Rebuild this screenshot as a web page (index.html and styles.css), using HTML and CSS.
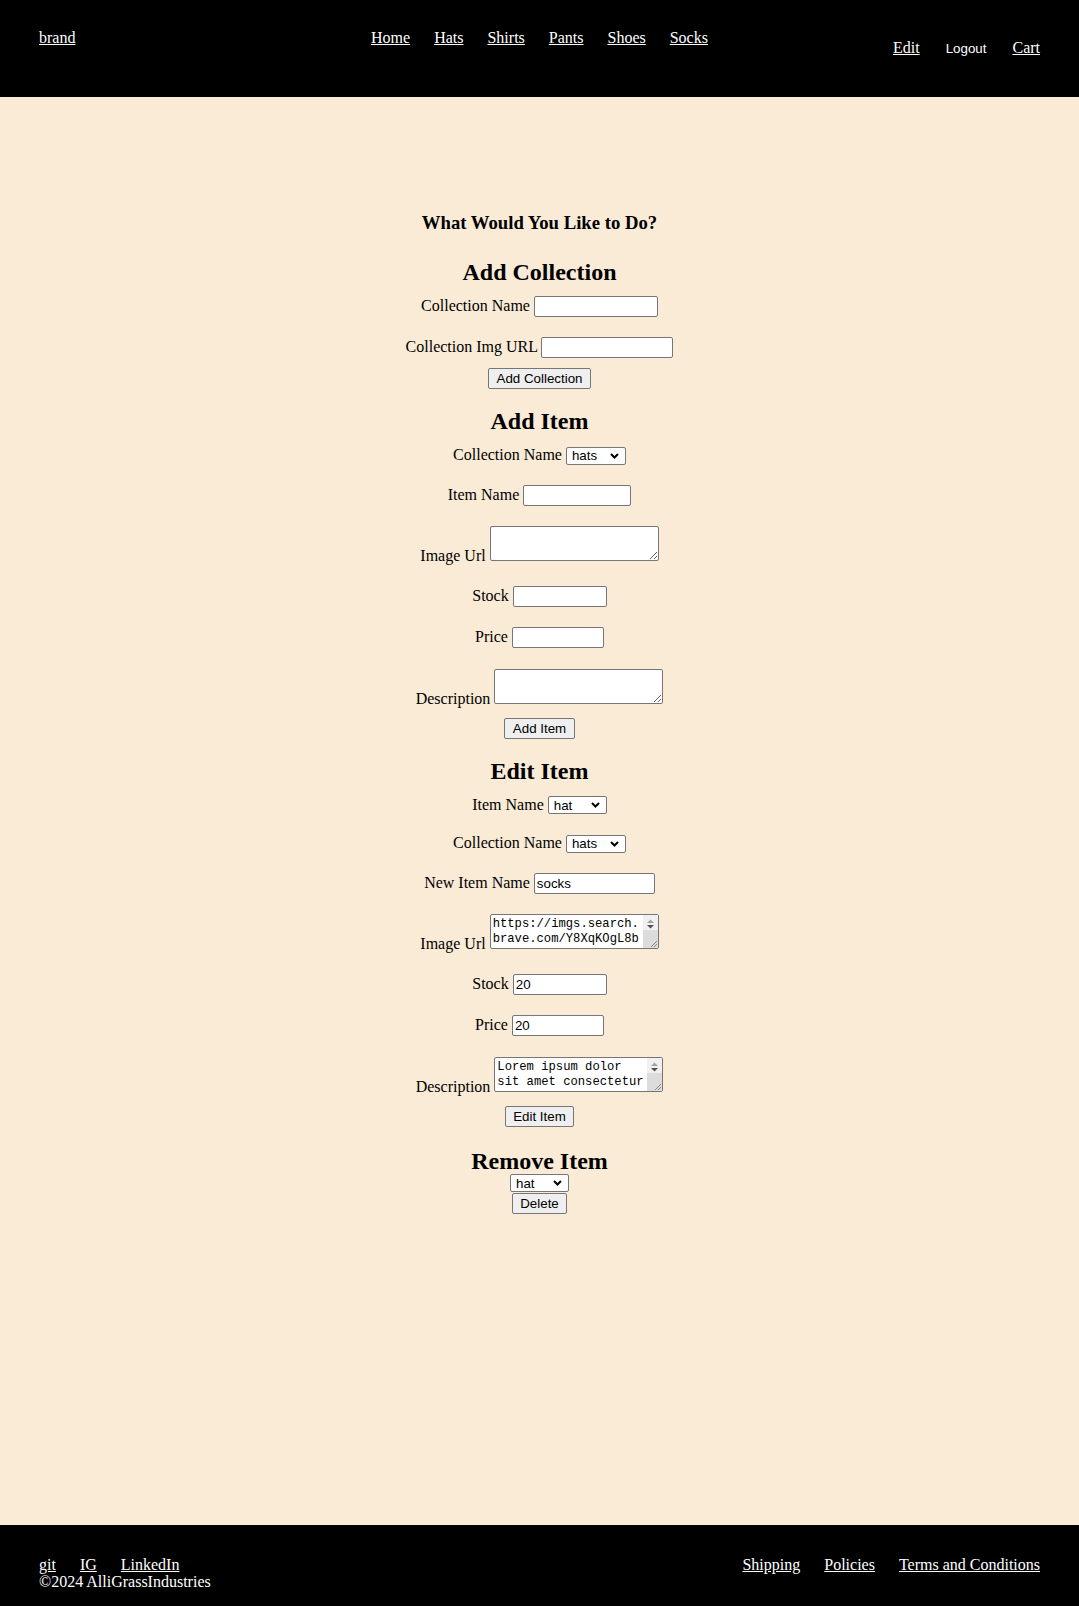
FILE: index.html
```html
<!DOCTYPE html>
<html lang="en">
<head>
<meta charset="utf-8">
<title>Edit</title>
<link rel="stylesheet" href="styles.css">
</head>
<body>
<header class="topbar">
  <a class="brand" href="#">brand</a>
  <nav class="nav">
    <a href="#">Home</a>
    <a href="#">Hats</a>
    <a href="#">Shirts</a>
    <a href="#">Pants</a>
    <a href="#">Shoes</a>
    <a href="#">Socks</a>
  </nav>
  <div class="account">
    <a href="#">Edit</a>
    <button class="logout" type="button">Logout</button>
    <a href="#">Cart</a>
  </div>
</header>

<main class="admin">
  <h3 class="ask">What Would You Like to Do?</h3>

  <section class="group group-first">
    <h2>Add Collection</h2>
    <div class="row">Collection Name <input class="in w124" type="text"></div>
    <div class="row">Collection Img URL <input class="in w132" type="text"></div>
    <div class="row row-btn"><button class="btn" type="button">Add Collection</button></div>
  </section>

  <section class="group">
    <h2>Add Item</h2>
    <div class="row row-sel">Collection Name <span class="sel"><select class="w60"><option>hats</option></select><svg class="chev" width="9" height="6" viewBox="0 0 9 6"><polyline points="1,1 4.5,4.5 8,1" fill="none" stroke="#000" stroke-width="2"/></svg></span></div>
    <div class="row">Item Name <input class="in w108" type="text"></div>
    <div class="row row-ta">Image Url <span class="ta"><textarea class="w169"></textarea></span></div>
    <div class="row">Stock <input class="in w94" type="text"></div>
    <div class="row">Price <input class="in w92" type="text"></div>
    <div class="row row-ta">Description <span class="ta"><textarea class="w169"></textarea></span></div>
    <div class="row row-btn"><button class="btn" type="button">Add Item</button></div>
  </section>

  <section class="group">
    <h2>Edit Item</h2>
    <div class="row row-sel">Item Name <span class="sel"><select class="w59"><option>hat</option></select><svg class="chev" width="9" height="6" viewBox="0 0 9 6"><polyline points="1,1 4.5,4.5 8,1" fill="none" stroke="#000" stroke-width="2"/></svg></span></div>
    <div class="row row-sel">Collection Name <span class="sel"><select class="w60"><option>hats</option></select><svg class="chev" width="9" height="6" viewBox="0 0 9 6"><polyline points="1,1 4.5,4.5 8,1" fill="none" stroke="#000" stroke-width="2"/></svg></span></div>
    <div class="row">New Item Name <input class="in w121" type="text" value="socks"></div>
    <div class="row row-ta">Image Url <span class="ta"><textarea class="w169 filled url">https://imgs.search.brave.com/Y8XqKOgL8bLcHQWPZzRvWOJxvmVYKyZgJBvCqJqJ5ec/rs:fit:500:0:0/g:ce/aHR0cHM6Ly9tZWRp</textarea><span class="sb"><span class="sb-btns"><svg width="15" height="15" viewBox="0 0 15 15"><polygon points="4,8 7.5,4.5 11,8" fill="#a3a3a3"/><polygon points="4,10 7.5,13.5 11,10" fill="#505050"/></svg></span><span class="sb-corner"><svg width="15" height="16" viewBox="0 0 15 16"><line x1="14" y1="9" x2="8" y2="15" stroke="#8a8a8a" stroke-width="1"/><line x1="14" y1="12" x2="11" y2="15" stroke="#8a8a8a" stroke-width="1"/></svg></span></span></span></div>
    <div class="row">Stock <input class="in w94" type="text" value="20"></div>
    <div class="row">Price <input class="in w92" type="text" value="20"></div>
    <div class="row row-ta">Description <span class="ta"><textarea class="w169 filled">Lorem ipsum dolor sit amet consectetur adipiscing elit sed do eiusmod tempor</textarea><span class="sb"><span class="sb-btns"><svg width="15" height="15" viewBox="0 0 15 15"><polygon points="4,8 7.5,4.5 11,8" fill="#a3a3a3"/><polygon points="4,10 7.5,13.5 11,10" fill="#505050"/></svg></span><span class="sb-corner"><svg width="15" height="16" viewBox="0 0 15 16"><line x1="14" y1="9" x2="8" y2="15" stroke="#8a8a8a" stroke-width="1"/><line x1="14" y1="12" x2="11" y2="15" stroke="#8a8a8a" stroke-width="1"/></svg></span></span></span></div>
    <div class="row row-btn"><button class="btn" type="button">Edit Item</button></div>
  </section>

  <section class="group group-remove">
    <h2>Remove Item</h2>
    <div class="row row-sel"><span class="sel"><select class="w59"><option>hat</option></select><svg class="chev" width="9" height="6" viewBox="0 0 9 6"><polyline points="1,1 4.5,4.5 8,1" fill="none" stroke="#000" stroke-width="2"/></svg></span></div>
    <div class="row row-btn"><button class="btn" type="button">Delete</button></div>
  </section>
</main>

<footer class="foot">
  <div class="foot-left">
    <div class="links">
      <a href="#">git</a>
      <a href="#">IG</a>
      <a href="#">LinkedIn</a>
    </div>
    <div class="copy">©2024 AlliGrassIndustries</div>
  </div>
  <div class="links">
    <a href="#">Shipping</a>
    <a href="#">Policies</a>
    <a href="#">Terms and Conditions</a>
  </div>
</footer>
</body>
</html>
```

FILE: styles.css
```css
html, body {
  margin: 0;
  padding: 0;
}

body {
  font-family: "Liberation Serif", "Times New Roman", serif;
  font-size: 16px;
  line-height: 18px;
  color: #000;
  background: #faebd7;
  min-height: 100vh;
  display: flex;
  flex-direction: column;
}

a {
  color: #fff;
  text-decoration: underline;
}

/* ---------- header ---------- */
.topbar {
  background: #000;
  height: 97px;
  box-sizing: border-box;
  padding: 29px 39px 0 39px;
  display: grid;
  grid-template-columns: 1fr auto 1fr;
  align-items: start;
}

.brand {
  justify-self: start;
}

.nav {
  display: flex;
  gap: 24px;
}

.account {
  justify-self: end;
  display: flex;
  align-items: baseline;
  gap: 26px;
  margin-top: 10px;
}

.logout {
  background: none;
  border: 0;
  padding: 0;
  margin: 0;
  color: #fff;
  font-family: "Liberation Sans", Arial, sans-serif;
  font-size: 13.33px;
  line-height: 18px;
}

/* ---------- main ---------- */
.admin {
  flex: 1;
  text-align: center;
  padding-top: 115px;
}

.ask {
  font-size: 18.72px;
  line-height: 22px;
  font-weight: bold;
  margin: 0 0 6px;
}

.group {
  padding-top: 18px;
}

.group-remove {
  padding-top: 20px;
}

.group h2 {
  font-size: 24px;
  line-height: 28px;
  font-weight: bold;
  margin: 0 0 11px;
}

.group-first h2 {
  margin-bottom: 10px;
}

.group-remove h2 {
  margin-bottom: -1px;
}

.row {
  height: 21px;
  white-space: nowrap;
}

.row-sel {
  height: 18px;
}

.row-ta {
  height: 35px;
}

.row + .row {
  margin-top: 20.5px;
}

.group-first .row + .row {
  margin-top: 20px;
}

.row-ta + .row {
  margin-top: 24.5px;
}

.row + .row-btn,
.group-first .row + .row-btn {
  margin-top: 10px;
}

.row-ta + .row-btn {
  margin-top: 14px;
}

.row-sel + .row-btn {
  margin-top: 1px;
}

/* ---------- controls ---------- */
.in {
  box-sizing: border-box;
  height: 21px;
  margin: 0;
  padding: 1px 2px;
  border: 1px solid #767676;
  border-radius: 2px;
  background: #fff;
  color: #000;
  font-family: "Liberation Sans", Arial, sans-serif;
  font-size: 13.33px;
  vertical-align: baseline;
}

.btn {
  box-sizing: border-box;
  height: 21px;
  margin: 0;
  padding: 1px 7.5px;
  border: 1px solid #767676;
  border-radius: 2px;
  background: #efefef;
  color: #000;
  font-family: "Liberation Sans", Arial, sans-serif;
  font-size: 13.33px;
  line-height: normal;
}

.sel {
  display: inline-block;
  position: relative;
  font-family: "Liberation Sans", Arial, sans-serif;
  font-size: 13.33px;
  line-height: normal;
}

.sel select {
  -webkit-appearance: none;
  appearance: none;
  box-sizing: border-box;
  height: 18px;
  margin: 0;
  padding: 0 0 0 5px;
  border: 1px solid #767676;
  border-radius: 2px;
  background: #fff;
  color: #000;
  font-family: "Liberation Sans", Arial, sans-serif;
  font-size: 13.33px;
}

.chev {
  position: absolute;
  right: 7px;
  top: 6px;
  pointer-events: none;
}

.ta {
  display: inline-block;
  position: relative;
  overflow: hidden;
  vertical-align: baseline;
  line-height: normal;
}

.ta textarea {
  display: block;
  box-sizing: border-box;
  height: 35px;
  margin: 0;
  padding: 2px;
  border: 1px solid #767676;
  border-radius: 2px;
  background: #fff;
  color: #000;
  font-family: "Liberation Mono", "DejaVu Sans Mono", monospace;
  font-size: 12.2px;
  line-height: 15px;
  overflow: hidden;
  resize: both;
}

.ta textarea.filled {
  padding: 2px 18px 2px 2px;
}

.ta textarea.url {
  word-break: break-all;
}

.sb {
  position: absolute;
  top: 1px;
  right: 1px;
  bottom: 1px;
  width: 15px;
  display: flex;
  flex-direction: column;
  pointer-events: none;
}

.sb-btns {
  display: block;
  height: 15px;
  background: #f0f0f0;
}

.sb-btns svg,
.sb-corner svg {
  display: block;
}

.sb-corner {
  display: flex;
  align-items: flex-end;
  flex: 1;
  background: #dcdcdc;
}

.w124 { width: 124px; }
.w132 { width: 132px; }
.w108 { width: 108px; }
.w94 { width: 94px; }
.w92 { width: 92px; }
.w121 { width: 121px; }
.w60 { width: 60px; }
.w59 { width: 59px; }
.w169 { width: 169px; }

/* ---------- footer ---------- */
.foot {
  background: #000;
  color: #fff;
  height: 81px;
  box-sizing: border-box;
  padding: 31px 39px 0 39px;
  display: flex;
  justify-content: space-between;
  align-items: flex-start;
}

.links {
  display: flex;
  gap: 24px;
}

.copy {
  margin-top: -1px;
}
```
